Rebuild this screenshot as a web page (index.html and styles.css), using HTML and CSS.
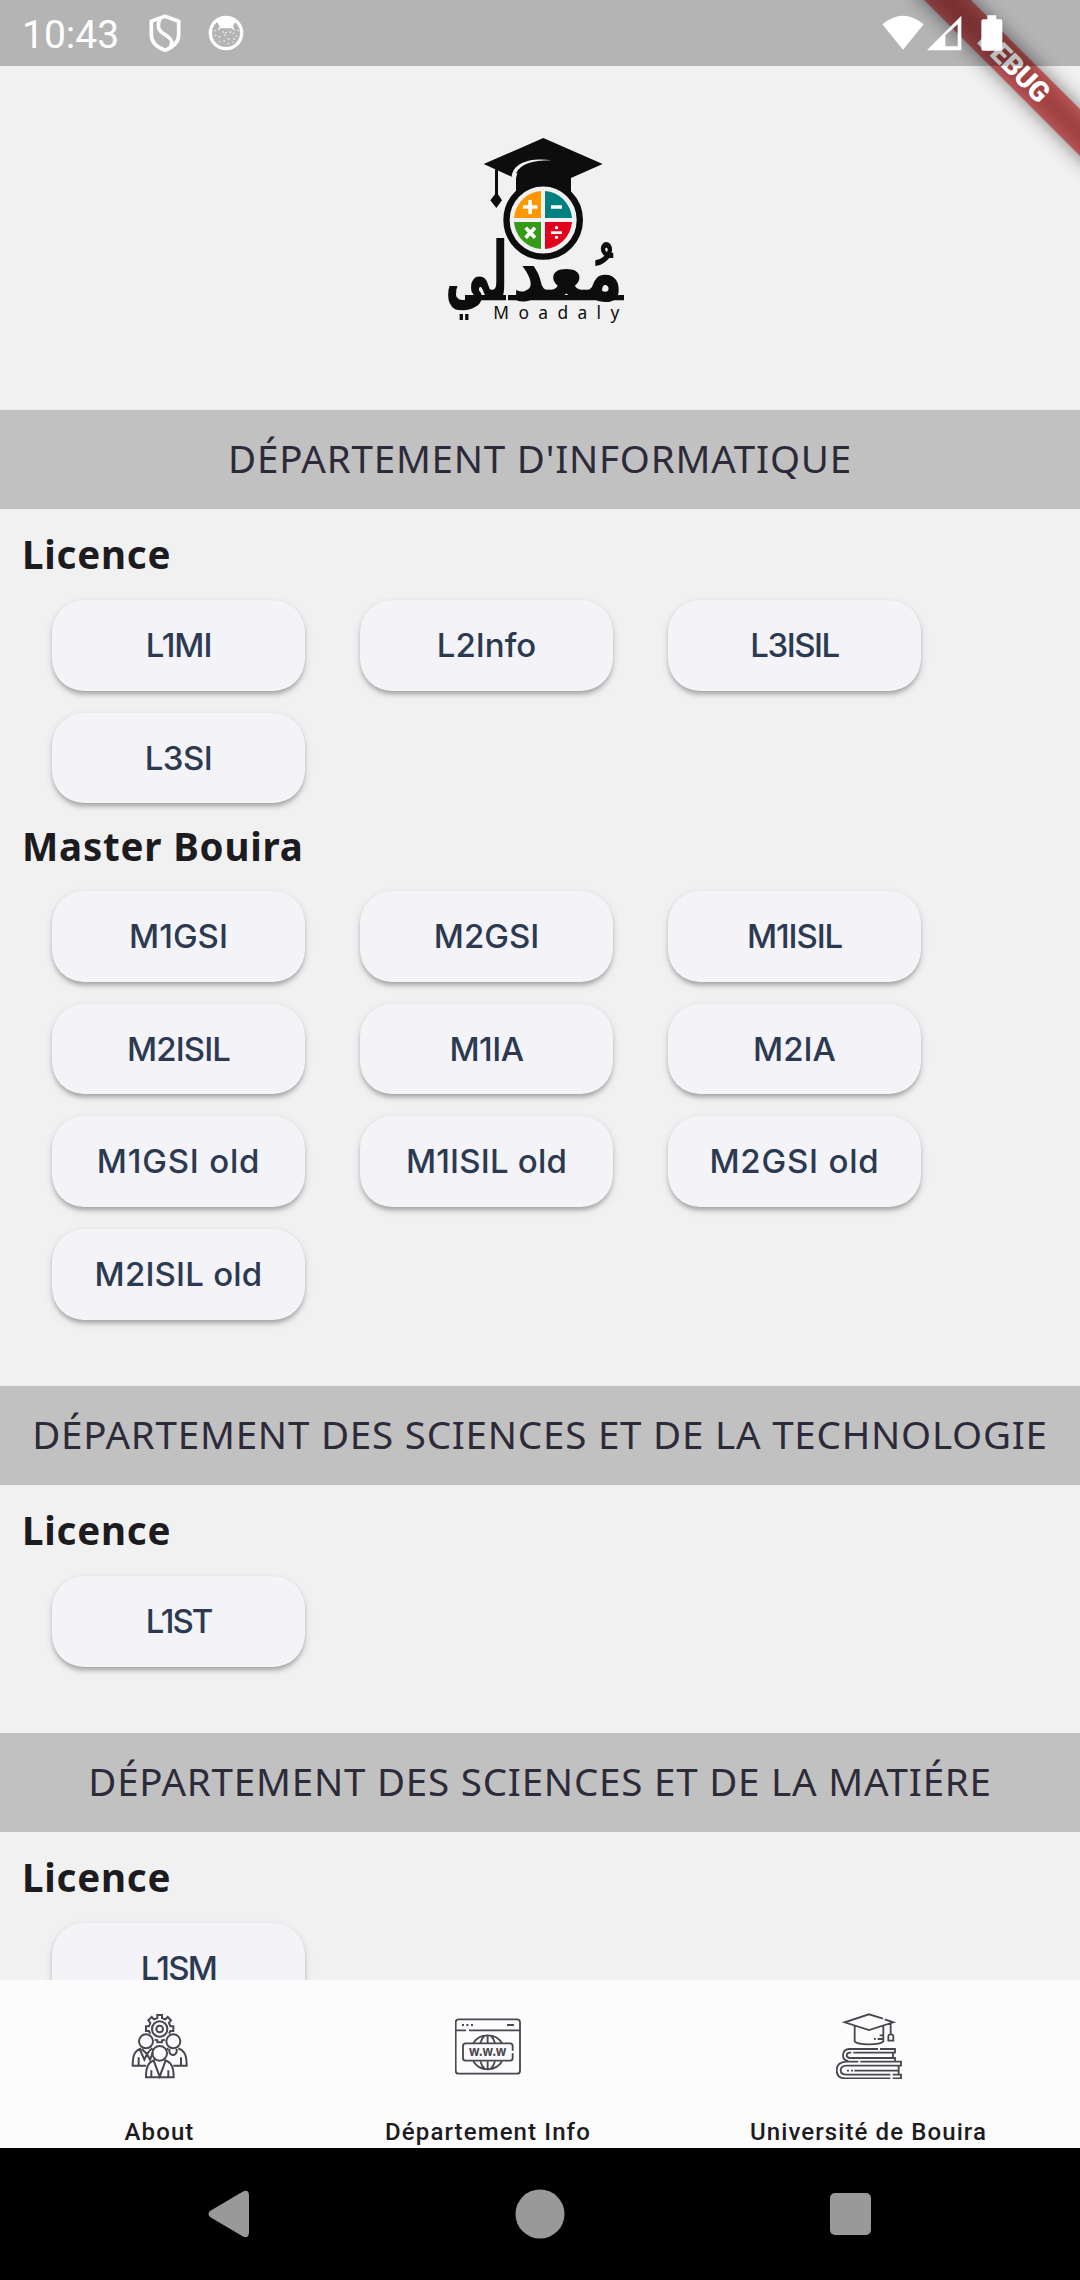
FILE: index.html
```html
<!DOCTYPE html>
<html lang="fr">
<head>
<meta charset="utf-8">
<title>Moadaly</title>
<link rel="stylesheet" href="styles.css">
</head>
<body>
<div class="screen">
  <header class="status">
    <span class="clock">10:43</span>
    <svg class="status-app" width="32" height="38" viewBox="448 42 96 114" fill="none" stroke="#fff">
      <path d="M496 49 L537 64 V105 C537 128 516 143 496 151 C475 143 455 128 455 105 V64 Z" stroke-width="11" stroke-linejoin="round"/>
      <path d="M480 57 C468 92 486 97 502 108 C517 118 520 127 512 140" stroke-width="11"/>
    </svg>
    <svg class="status-app" width="36" height="36" viewBox="625 46 108 108">
      <circle cx="679" cy="100" r="47" fill="none" stroke="#fff" stroke-width="10"/>
      <path d="M649 62 Q679 48 709 62 L700 80 L706 94 L696 86 Q679 86 664 85 L653 94 L660 80 Z" fill="#fff"/>
      <path d="M643 93h5M712 93h5M667 97h5M676 99h5M689 97h6M645 107h5M657 112h5M708 110h5M673 106h5M699 101h5M684 118h6M657 126h5M671 124h5M701 118h5M683 132h5M697 128h4" stroke="#fff" stroke-width="4" stroke-opacity=".7"/>
    </svg>
    <svg class="status-system" width="121" height="36" viewBox="68 44 363 108" fill="#fff">
      <path d="M69 72 Q131 20 193 72 L131 148 Z"/>
      <path fill-rule="evenodd" d="M203 150 L306 46 V150 Z M258 105 V138 H295 V72 Z"/>
      <path d="M384 45 H411 V57 H423 Q429 57 429 63 V145 Q429 151 423 151 H372 Q366 151 366 145 V63 Q366 57 372 57 H384 Z"/>
    </svg>
  </header>

  <div class="debug"><div class="debug-shadow"></div><div class="debug-band">DEBUG</div></div>

  <main class="content">
    <div class="logo">
      <svg width="210" height="220" viewBox="0 0 630 660">
        <g fill="#0d0d0d">
          <path d="M340 54 L518 132 L423 174 V225 H258 V175 L262 158 L245 170 L161 132 Z"/>
          <path d="M195 148 H204 V223 L216 241 L199 264 L181 241 L195 223 Z"/>
        </g>
        <path d="M245 170 C250 128 300 112 366 121 C310 120 272 132 259 158 V164 Z" fill="#f1f1f1"/>
        <circle cx="339.500" cy="300" r="110" fill="#f1f1f1" stroke="#0d0d0d" stroke-width="19"/>
        <path d="M333 294 H252 A88 88 0 0 1 333 213 Z" fill="#ff9800"/>
        <path d="M345 294 H426 A88 88 0 0 0 345 213 Z" fill="#008080"/>
        <path d="M333 306 H252 A88 88 0 0 0 333 387 Z" fill="#359a18"/>
        <path d="M345 306 H426 A88 88 0 0 1 345 387 Z" fill="#e2001f"/>
        <path d="M279 261 H322 M300.500 240 V282 M363 261 H396" stroke="#fff" stroke-width="11" fill="none"/>
        <path d="M287 323 L315 353 M315 323 L287 353" stroke="#fff" stroke-width="11"/>
        <path d="M363 338 H396" stroke="#fff" stroke-width="8"/>
        <circle cx="379.500" cy="323" r="5" fill="#fff"/><circle cx="379.500" cy="352" r="5" fill="#fff"/>
        <text class="logo-ar" transform="translate(413 541) scale(1.1 1.42)" text-anchor="middle">مُعد</text>
        <text class="logo-ar" transform="translate(140 541) scale(.79 1.42)" text-anchor="middle">لي</text>
        <path d="M234 525 H582 V541 H234 Z M105 525 H228 V541 H105 Z" fill="#0d0d0d"/>
        <text class="logo-latin" x="190" y="597" textLength="378">Moadaly</text>
      </svg>
    </div>

    <section>
      <h2 class="band">DÉPARTEMENT D'INFORMATIQUE</h2>
      <h3 class="level">Licence</h3>
      <div class="grid">
        <a class="btn s-11">L1MI</a><a class="btn">L2Info</a><a class="btn s-15">L3ISIL</a>
        <a class="btn s-5">L3SI</a>
      </div>
      <h3 class="level next">Master Bouira</h3>
      <div class="grid">
        <a class="btn">M1GSI</a><a class="btn">M2GSI</a><a class="btn s-11">M1ISIL</a>
        <a class="btn s-9">M2ISIL</a><a class="btn s-5">M1IA</a><a class="btn">M2IA</a>
        <a class="btn s8">M1GSI old</a><a class="btn s2">M1ISIL old</a><a class="btn s8">M2GSI old</a>
        <a class="btn s2">M2ISIL old</a>
      </div>
    </section>
    <section>
      <h2 class="band">DÉPARTEMENT DES SCIENCES ET DE LA TECHNOLOGIE</h2>
      <h3 class="level">Licence</h3>
      <div class="grid"><a class="btn s-20">L1ST</a></div>
    </section>
    <section>
      <h2 class="band">DÉPARTEMENT DES SCIENCES ET DE LA MATIÉRE</h2>
      <h3 class="level">Licence</h3>
      <div class="grid"><a class="btn s-17">L1SM</a></div>
    </section>
  </main>

  <nav class="tabs">
    <a class="tab">
      <svg width="66" height="66" viewBox="80 158 198 198" fill="none" stroke="#4a464f" stroke-width="6">
        <path d="M171 164 H185 V173 L195 177 L202 170 L212 180 L206 188 L210 198 H219 V212 H210 L206 220 M150 220 L146 212 H137 V198 H146 L150 188 L144 180 L154 170 L161 177 L171 173 V161 M163 238 L171 240 V246 H185 V240 L194 238"/>
        <circle cx="178" cy="206" r="23"/><circle cx="178" cy="206" r="10"/>
        <circle cx="137" cy="243" r="21"/><circle cx="219" cy="243" r="21"/><circle cx="178" cy="279" r="22"/>
        <path d="M122 264 C104 270 97 283 97 316 H137 M152 264 L160 271 M115 291 V316 M118 266 L132 298 L140 281 L149 298 L158 276 M124 266 L140 281 L152 266"/>
        <path d="M234 264 C252 270 259 283 259 316 H219 M242 291 V316 M204 264 L197 270 M207 266 V274 Q210 284 218 284 Q226 284 229 274 V266"/>
        <path d="M164 299 C143 305 137 320 137 351 H220 C220 320 213 305 192 299 M153 330 V351 M204 330 V351 M161 303 L178 349 L195 303"/>
      </svg>
      <span>About</span>
    </a>
    <a class="tab">
      <svg width="66" height="66" viewBox="255 158 198 198" fill="none" stroke="#4a464f" stroke-width="5.500">
        <path d="M257 210 V186 Q257 177 266 177 H441 Q450 177 450 186 V331 Q450 340 441 340 H266 Q257 340 257 331 V210 H288 M297 210 H450"/>
        <path d="M276 194 h6 M289 194 h6 M303 194 h6 M411 194 h21"/>
        <path d="M310 248 Q324 225 353 225 Q382 225 396 248 M310 303 Q324 327 353 327 Q382 327 396 303 M353 225 V248 M353 303 V327 M331 248 Q335 233 344 226 M375 248 Q371 233 362 226 M331 303 Q335 318 344 325 M375 303 Q371 318 362 325"/>
        <path d="M428 271 V257 Q428 249 420 249 H287 Q279 249 279 257 V293 Q279 301 287 301 H420 Q428 301 428 293 V279"/>
        <text class="www" x="297" y="288" textLength="112" lengthAdjust="spacingAndGlyphs">w.w.w</text>
      </svg>
      <span>Département Info</span>
    </a>
    <a class="tab">
      <svg width="66" height="66" viewBox="286 158 198 198" fill="none" stroke="#4a464f" stroke-width="5.500">
        <path d="M427 175 L385 162 L312 186 L385 209 L458 186 L432 177 M342 197 V243 Q350 252 385 252 Q420 252 428 243 V197 M450 190 V221 M443 241 V228 Q443 222 450 222 Q458 222 458 228 V241 Z M428 225 H417 M428 236 H411 M405 236 H400"/>
        <path d="M412 266 H325 Q307 268 307 285 Q307 300 322 302 M418 266 H463 V277 H338 M332 277 H326 Q318 279 318 285 Q318 291 326 293 H463 V302 M457 277 V293"/>
        <path d="M353 304 H316 Q288 306 288 330 Q288 354 314 354 H449 M359 304 H481 V316 H318 Q300 317 300 330 Q300 343 318 343 H449 M456 343 H481 V354 H456 M474 316 V343 M341 331 H474 M319 331 H325 M331 331 H337"/>
      </svg>
      <span>Université de Bouira</span>
    </a>
  </nav>

  <footer class="system">
    <svg width="42" height="48" viewBox="0 0 42 48"><path d="M2 21 L35 1.500 Q41 -1 41 6 V42 Q41 49 35 46.500 L2 27 Q-1 24 2 21 Z" fill="#999"/></svg>
    <svg width="50" height="50" viewBox="0 0 50 50"><circle cx="25" cy="25" r="24.500" fill="#999"/></svg>
    <svg width="42" height="42" viewBox="0 0 42 42"><rect width="41" height="42" rx="5" fill="#999"/></svg>
  </footer>
</div>
</body>
</html>
```
FILE: styles.css
```css
* { box-sizing: border-box; }
body { margin: 0; background: #f1f1f1; }

.screen {
  position: relative;
  width: 1080px;
  height: 2280px;
  display: flex;
  flex-direction: column;
  overflow: hidden;
  background: #f1f1f1;
}

/* status bar */
.status {
  position: relative;
  z-index: 2;
  flex: none;
  height: 66px;
  padding: 0 77px 0 22px;
  display: flex;
  align-items: center;
  background: rgba(0, 0, 0, .25);
  color: #fff;
}
.clock {
  width: 127px;
  font: 400 39px Roboto, sans-serif;
  padding-top: 3px;
}
.status-app { margin-right: 27px; }
.status-system { margin-left: auto; }

/* diagonal corner ribbon */
.debug {
  position: absolute;
  z-index: 1;
  left: 884px;
  top: 50px;
  width: 260px;
  height: 33px;
  transform: rotate(45deg);
}
.debug-shadow {
  position: absolute;
  inset: 0;
  background: rgba(0, 0, 0, .5);
  filter: blur(9.500px);
}
.debug-band {
  position: absolute;
  inset: 0;
  background: rgba(183, 28, 28, .627);
  color: #fff;
  font: 900 28px/33px Roboto, sans-serif;
  letter-spacing: -.4px;
  text-align: center;
}

.content { flex: 1; min-height: 0; overflow: hidden; }

.logo {
  height: 343.750px;
  padding: 54px 0 0 430px;
}
.logo svg { display: block; }
.logo-ar { font: bold 172px "DejaVu Sans", sans-serif; fill: #0d0d0d; }
.logo-latin { font: 52px "Noto Sans", sans-serif; fill: #0d0d0d; }

section { margin-bottom: 66px; }

.band {
  margin: 0;
  height: 99px;
  background: #c1c1c1;
  color: #2d2a3a;
  font: 400 38.500px/97px "Noto Sans", sans-serif;
  letter-spacing: .79px;
  text-align: center;
  white-space: nowrap;
}
.level {
  margin: 0;
  height: 91px;
  padding-left: 22px;
  color: #1c1b1f;
  font: 700 38.500px/90px "Noto Sans", sans-serif;
  letter-spacing: .79px;
}
.level.next { height: 87.500px; line-height: 86px; }

.grid {
  display: grid;
  grid-template-columns: repeat(3, 253px);
  grid-auto-rows: 90.750px;
  gap: 22px 55px;
  padding-left: 52px;
}
.btn {
  border-radius: 32px;
  background: #f4f3f8;
  box-shadow: 0 4px 4px -1px rgba(0, 0, 0, .24), 0 3px 8px rgba(0, 0, 0, .12), 0 0 1px rgba(0, 0, 0, .06);
  color: #2b3a50;
  font: 500 33px/91px Inter, sans-serif;
  text-align: center;
  white-space: nowrap;
}
.s-20 { letter-spacing: -2px; }
.s-17 { letter-spacing: -1.700px; }
.s-15 { letter-spacing: -1.500px; }
.s-11 { letter-spacing: -1.100px; }
.s-9 { letter-spacing: -.900px; }
.s-5 { letter-spacing: -.500px; }
.s2 { letter-spacing: .200px; }
.s8 { letter-spacing: .800px; }

/* bottom tabs */
.tabs {
  flex: none;
  height: 168px;
  display: grid;
  grid-template-columns: 319px 338px 423px;
  background: #fcfcfc;
}
.tab {
  display: flex;
  flex-direction: column;
  align-items: center;
  padding-top: 32.500px;
  color: #1c1b1f;
  font: 500 24px/28px Roboto, sans-serif;
  letter-spacing: 1.100px;
}
.tab svg { display: block; margin-bottom: 39px; }
.www { font: 700 40px "Noto Sans", sans-serif; fill: #4a464f; stroke: none; letter-spacing: 0; }

.system {
  flex: none;
  height: 132px;
  padding: 0 208px;
  display: flex;
  align-items: center;
  justify-content: space-between;
  background: #000;
}
```
